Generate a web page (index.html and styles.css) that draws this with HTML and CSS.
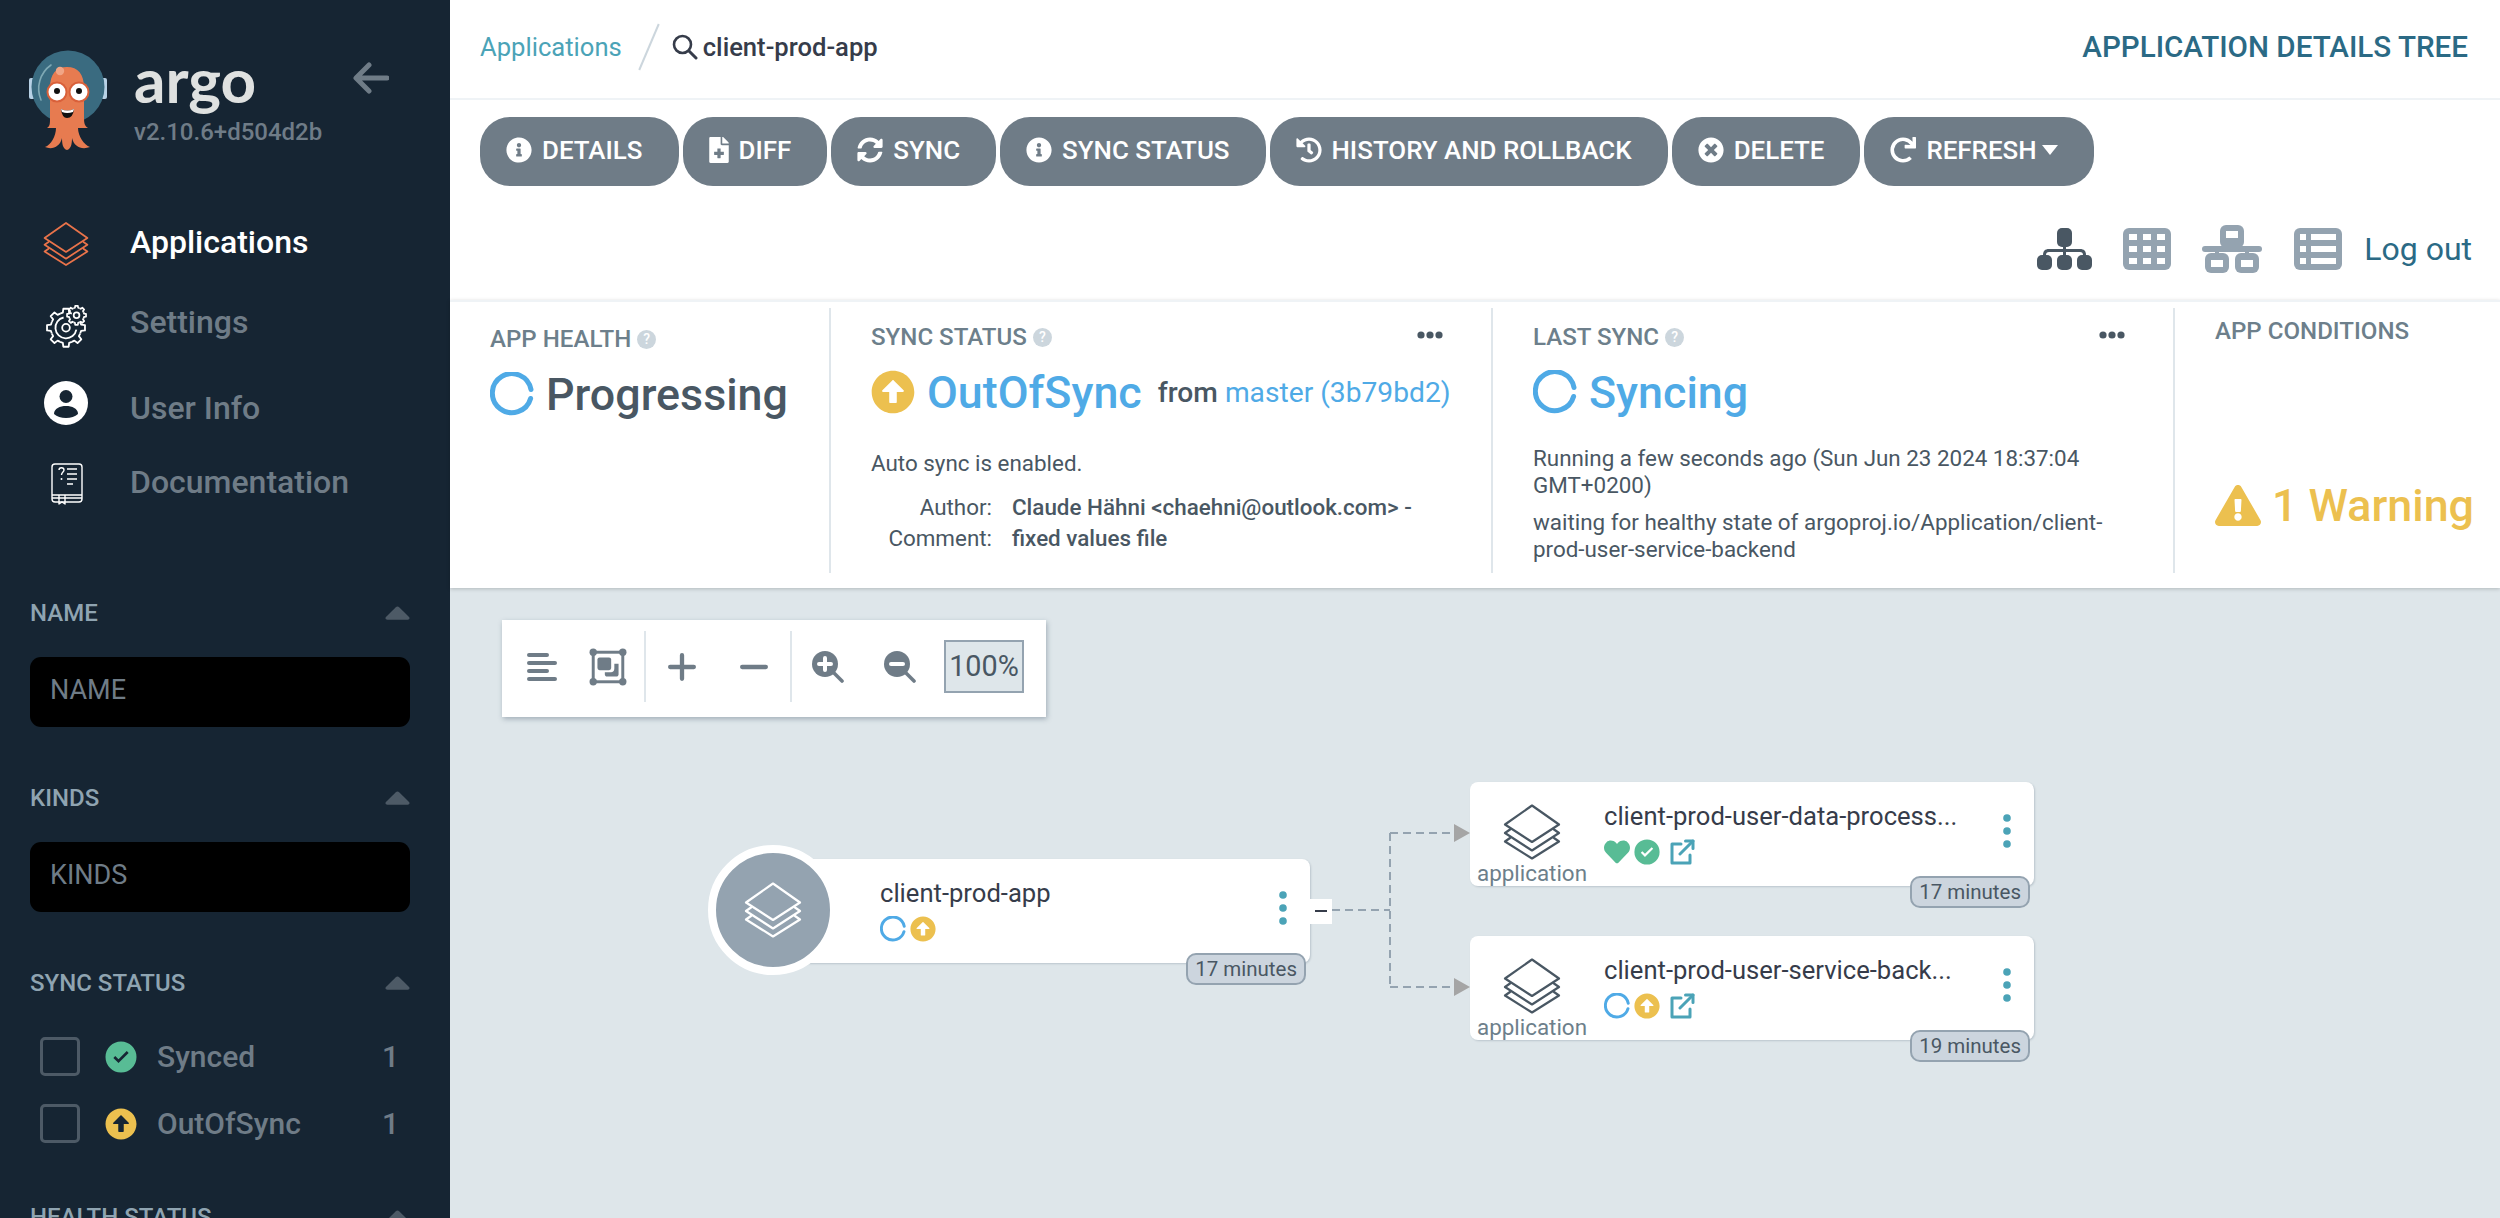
FILE: index.html
```html
<!DOCTYPE html>
<html lang="en">
<head>
    <meta charset="UTF-8">
    <meta name="viewport" content="width=device-width, initial-scale=1.0">
    <title>client-prod-app - Argo CD</title>
    <link rel="stylesheet" href="styles.css">
</head>
<body>

<!-- shared icons -->
<svg class="icon-defs" aria-hidden="true">
    <symbol id="i-info" viewBox="0 0 512 512"><path d="M256 8C119 8 8 119.1 8 256c0 137 111 248 248 248s248-111 248-248C504 119.1 393 8 256 8zm0 110c23.2 0 42 18.8 42 42s-18.8 42-42 42-42-18.8-42-42 18.8-42 42-42zm56 254c0 6.6-5.4 12-12 12h-88c-6.6 0-12-5.4-12-12v-24c0-6.6 5.4-12 12-12h12v-64h-12c-6.6 0-12-5.4-12-12v-24c0-6.6 5.4-12 12-12h64c6.6 0 12 5.4 12 12v100h12c6.6 0 12 5.4 12 12v24z"/></symbol>
    <symbol id="i-check" viewBox="0 0 512 512"><path fill-rule="evenodd" d="M504 256A248 248 0 1 1 8 256 248 248 0 0 1 504 256zM216 352L134 270 164 240 216 292 348 160 378 190z"/></symbol>
    <symbol id="i-up" viewBox="0 0 512 512"><path d="M8 256C8 119 119 8 256 8s248 111 248 248-111 248-248 248S8 393 8 256zm292 116V256h70.900c10.700 0 16.100-13 8.500-20.500L264.500 121.200c-4.700-4.700-12.200-4.700-16.900 0l-115 114.300c-7.600 7.600-2.200 20.500 8.500 20.500H212v116c0 6.600 5.400 12 12 12h64c6.600 0 12-5.400 12-12z"/></symbol>
    <symbol id="i-times" viewBox="0 0 512 512"><path d="M256 8C119 8 8 119 8 256s111 248 248 248 248-111 248-248S393 8 256 8zm121.6 313.1c4.7 4.7 4.7 12.3 0 17L338 377.6c-4.7 4.7-12.3 4.7-17 0L256 312l-65.1 65.6c-4.7 4.7-12.3 4.7-17 0L134.4 338c-4.7-4.7-4.7-12.3 0-17l65.6-65-65.6-65.1c-4.7-4.7-4.7-12.3 0-17l39.6-39.6c4.7-4.7 12.3-4.7 17 0l65 65.7 65.1-65.6c4.7-4.7 12.3-4.7 17 0l39.6 39.6c4.7 4.7 4.7 12.3 0 17L312 256l65.6 65.1z"/></symbol>
    <symbol id="i-redo" viewBox="0 0 512 512"><path d="M500.33 0h-47.41a12 12 0 0 0-12 12.57l4 82.76A247.42 247.42 0 0 0 256 8C119.34 8 7.9 119.53 8 256.19 8.1 393.07 119.1 504 256 504a247.1 247.1 0 0 0 166.18-63.91 12 12 0 0 0 .48-17.43l-34-34a12 12 0 0 0-16.38-.55A176 176 0 1 1 402.1 157.8l-101.53-4.87a12 12 0 0 0-12.57 12v47.41a12 12 0 0 0 12 12h200.33a12 12 0 0 0 12-12V12a12 12 0 0 0-12-12z"/></symbol>
    <symbol id="i-sync" viewBox="0 0 512 512"><path d="M370.72 133.28C339.458 104.008 298.888 87.962 255.848 88c-77.458.068-144.328 53.178-162.791 126.85-1.344 5.363-6.122 9.15-11.651 9.15H24.103c-7.498 0-13.194-6.807-11.807-14.176C33.933 94.924 134.813 8 256 8c66.448 0 126.791 26.136 171.315 68.685L463.03 40.97C478.149 25.851 504 36.559 504 57.941V192c0 13.255-10.745 24-24 24H345.941c-21.382 0-32.09-25.851-16.971-40.971l41.75-41.749zM32 296h134.059c21.382 0 32.09 25.851 16.971 40.971l-41.75 41.75c31.262 29.273 71.835 45.319 114.876 45.28 77.418-.07 144.315-53.144 162.787-126.849 1.344-5.363 6.122-9.15 11.651-9.15h57.304c7.498 0 13.193 6.807 11.807 14.176C478.067 417.076 377.187 504 256 504c-66.448 0-126.791-26.136-171.315-68.685L48.97 471.03C33.851 486.149 8 475.441 8 454.059V320c0-13.255 10.745-24 24-24z"/></symbol>
    <symbol id="i-history" viewBox="0 0 512 512"><path d="M504 255.531c.253 136.64-111.18 248.372-247.82 248.468-59.015.042-113.223-20.53-155.822-54.911-11.077-8.94-11.905-25.541-1.839-35.607l11.267-11.267c8.609-8.609 22.353-9.551 31.891-1.984C173.062 425.135 212.781 440 256 440c101.705 0 184-82.311 184-184 0-101.705-82.311-184-184-184-48.814 0-93.149 18.969-126.068 49.932l50.754 50.754c10.08 10.08 2.941 27.314-11.313 27.314H24c-8.837 0-16-7.163-16-16V38.627c0-14.254 17.234-21.393 27.314-11.314l49.372 49.372C129.209 34.136 189.552 8 256 8c136.81 0 247.747 110.78 248 247.531zm-180.912 78.784l9.823-12.63c8.138-10.463 6.253-25.542-4.21-33.679L288 256.349V152c0-13.255-10.745-24-24-24h-16c-13.255 0-24 10.745-24 24v135.651l65.409 50.874c10.463 8.137 25.541 6.253 33.679-4.21z"/></symbol>
    <symbol id="i-file" viewBox="0 0 384 512"><path d="M377 105L279.1 7c-4.5-4.5-10.6-7-17-7H256v128h128v-6.1c0-6.3-2.5-12.4-7-16.9zm-153 31V0H24C10.7 0 0 10.7 0 24v464c0 13.3 10.7 24 24 24h336c13.3 0 24-10.7 24-24V160H248c-13.2 0-24-10.8-24-24zm64 160v48c0 4.4-3.6 8-8 8h-56v56c0 4.4-3.6 8-8 8h-48c-4.4 0-8-3.6-8-8v-56h-56c-4.4 0-8-3.6-8-8v-48c0-4.4 3.6-8 8-8h56v-56c0-4.4 3.6-8 8-8h48c4.4 0 8 3.6 8 8v56h56c4.4 0 8 3.6 8 8z"/></symbol>
    <symbol id="i-heart" viewBox="0 0 512 512"><path d="M462.3 62.6C407.5 15.9 326 24.3 275.7 76.2L256 96.5l-19.7-20.3C186.1 24.3 104.5 15.9 49.7 62.6c-62.8 53.6-66.1 149.8-9.9 207.9l193.5 199.8c12.5 12.9 32.8 12.9 45.3 0l193.5-199.8c56.3-58.1 53-154.3-9.8-207.9z"/></symbol>
    <symbol id="i-warning" viewBox="0 0 576 512"><path d="M569.517 440.013C587.975 472.007 564.806 512 527.94 512H48.054c-36.937 0-59.999-40.055-41.577-71.987L246.423 23.985c18.467-32.009 64.72-31.951 83.154 0l239.94 416.028zM288 354c-25.405 0-46 20.595-46 46s20.595 46 46 46 46-20.595 46-46-20.595-46-46-46zm-43.673-165.346l7.418 136c.347 6.364 5.609 11.346 11.982 11.346h48.546c6.373 0 11.635-4.982 11.982-11.346l7.418-136c.375-6.874-5.098-12.654-11.982-12.654h-63.383c-6.884 0-12.356 5.78-11.981 12.654z"/></symbol>
    <symbol id="i-spin" viewBox="0 0 44 44"><path d="M40.6 26.5A19.5 19.5 0 1 1 41 17.5" fill="none" stroke="currentColor" stroke-width="5" stroke-linecap="round"/></symbol>
    <symbol id="i-layers" viewBox="0 0 58 56"><g fill="none" stroke="currentColor" stroke-width="2.2" stroke-linejoin="round" stroke-linecap="round"><path d="M29 1.5L56 20.5 29 38 2 20.5z"/><path d="M7 25.5L2 29 29 46.5 56 29 51 25.5"/><path d="M7 34L2 37.5 29 54.5 56 37.5 51 34"/></g></symbol>
    <symbol id="i-external" viewBox="0 0 26 26"><g fill="none" stroke="currentColor" stroke-width="3" stroke-linecap="round" stroke-linejoin="round"><path d="M12 5H3v19h18v-8"/><path d="M11 15L24 2"/><path d="M16.5 2H24v7.5"/></g></symbol>
    <symbol id="i-kebab" viewBox="0 0 8 34"><circle cx="4" cy="4" r="3.8"/><circle cx="4" cy="17" r="3.8"/><circle cx="4" cy="30" r="3.8"/></symbol>
    <symbol id="i-dots" viewBox="0 0 26 8"><circle cx="4" cy="4" r="3.6"/><circle cx="13" cy="4" r="3.6"/><circle cx="22" cy="4" r="3.6"/></symbol>
    <symbol id="i-tri" viewBox="0 0 26 14"><path d="M11 1.2a3 3 0 0 1 4 0l10 10c1 1.2.5 2.8-1.5 2.8h-21C.5 14 0 12.4 1 11.2z"/></symbol>
    <path id="gear-tooth" d="M-6.1-14.8L-3.3-15.7-2.8-19.8 2.8-19.8 3.3-15.7 6.1-14.8" />
</svg>

<aside class="sidebar">
    <div class="brand">
        <svg class="brand-logo" viewBox="27 48 82 106">
            <rect x="29" y="78" width="6" height="21" rx="2" fill="#b7d1e5"/>
            <rect x="101" y="78" width="6" height="21" rx="2" fill="#b7d1e5"/>
            <circle cx="68" cy="87" r="36.5" fill="#3a6b80"/>
            <path d="M41 100A29 29 0 0 1 51 65" fill="none" stroke="#7fa9b4" stroke-width="1.6" stroke-linecap="round"/>
            <path d="M50 88C50 74 56 67 67 67S84 74 84 88V118C84 124 85 126 88 128L78 128C78 136 84 145 90 147 82 150 74 147 72 138 72 144 71 149 67 150 63 149 62 144 62 138 60 147 52 150 45 147 51 145 56 136 56 128H47C50 126 50 124 50 118z" fill="#e77b50"/>
            <circle cx="60" cy="71" r="4.2" fill="#f1a586"/>
            <circle cx="57" cy="92" r="10.5" fill="#d9603a"/>
            <circle cx="79" cy="92" r="10.5" fill="#d9603a"/>
            <circle cx="57" cy="92" r="8.5" fill="#fff"/>
            <circle cx="79" cy="92" r="8.5" fill="#fff"/>
            <circle cx="57" cy="91" r="3" fill="#111"/>
            <circle cx="79" cy="91" r="3" fill="#111"/>
            <path d="M61 109Q67 112 74 109 73 118 67 118 62 118 61 109z" fill="#111"/>
            <path d="M61 109Q67 112 74 109L73 112Q67 114 62 112z" fill="#fff"/>
        </svg>
        <div class="brand-text">
            <div class="brand-name">argo</div>
            <div class="brand-version">v2.10.6+d504d2b</div>
        </div>
        <svg class="brand-back" viewBox="0 0 36 32"><path d="M34 16H4M16 3L3 16 16 29" fill="none" stroke="currentColor" stroke-width="5" stroke-linecap="round" stroke-linejoin="round"/></svg>
    </div>

    <nav class="nav">
        <a class="nav-item nav-item-active">
            <span class="nav-icon"><svg class="nav-layers"><use href="#i-layers"/></svg></span>
            Applications
        </a>
        <a class="nav-item">
            <span class="nav-icon">
                <svg class="nav-gears" viewBox="-24 -36 48 60">
                    <g fill="none" stroke="#fff" stroke-width="1.9" stroke-linejoin="round">
                        <use href="#gear-tooth"/>
                        <use href="#gear-tooth" transform="rotate(90)"/>
                        <use href="#gear-tooth" transform="rotate(135)"/>
                        <use href="#gear-tooth" transform="rotate(180)"/>
                        <use href="#gear-tooth" transform="rotate(225)"/>
                        <use href="#gear-tooth" transform="rotate(270)"/>
                        <use href="#gear-tooth" transform="rotate(315)"/>
                        <path d="M-2.5-10.7A11 11 0 1 0 10.8 2"/>
                        <circle r="4"/>
                        <g transform="translate(11 -13) scale(.5)" stroke-width="3.6">
                            <use href="#gear-tooth"/>
                            <use href="#gear-tooth" transform="rotate(45)"/>
                            <use href="#gear-tooth" transform="rotate(90)"/>
                            <use href="#gear-tooth" transform="rotate(135)"/>
                            <use href="#gear-tooth" transform="rotate(180)"/>
                            <use href="#gear-tooth" transform="rotate(225)"/>
                            <use href="#gear-tooth" transform="rotate(270)"/>
                            <use href="#gear-tooth" transform="rotate(315)"/>
                            <circle r="6"/>
                        </g>
                    </g>
                </svg>
            </span>
            Settings
        </a>
        <a class="nav-item nav-item-user">
            <span class="nav-icon">
                <svg class="nav-user" viewBox="0 0 44 44"><circle cx="22" cy="22" r="22" fill="#fff"/><circle cx="22" cy="15.5" r="6.5" fill="#162533"/><path d="M10 33c0-5.5 6-8 12-8s12 2.500 12 8c-3 2.500-7 4-12 4s-9-1.500-12-4z" fill="#162533"/></svg>
            </span>
            User Info
        </a>
        <a class="nav-item nav-item-docs">
            <span class="nav-icon">
                <svg class="nav-doc" viewBox="0 0 32 42">
                    <g fill="none" stroke="#fff" stroke-width="1.4" stroke-linejoin="round">
                        <rect x="1" y="1" width="30" height="38" rx="3"/>
                        <path d="M1 32h30M1 35h30M8 32v9l3-2 3 2v-9"/>
                        <path d="M8 7c0-3 5-3 5 0 0 2-2.500 2-2.500 5M16 6h10M16 11h10M16 16h10M16 21h6"/>
                    </g>
                    <circle cx="10.500" cy="16" r="1" fill="#fff"/>
                </svg>
            </span>
            Documentation
        </a>
    </nav>

    <section class="filter filter-name">
        <div class="filter-head"><span>NAME</span><svg class="filter-tri"><use href="#i-tri"/></svg></div>
        <div class="filter-input">NAME</div>
    </section>
    <section class="filter">
        <div class="filter-head"><span>KINDS</span><svg class="filter-tri"><use href="#i-tri"/></svg></div>
        <div class="filter-input">KINDS</div>
    </section>
    <section class="filter">
        <div class="filter-head"><span>SYNC STATUS</span><svg class="filter-tri"><use href="#i-tri"/></svg></div>
        <div class="filter-row">
            <span class="checkbox"></span>
            <svg class="filter-status green"><use href="#i-check"/></svg>
            <span class="filter-label">Synced</span>
            <span class="filter-count">1</span>
        </div>
        <div class="filter-row">
            <span class="checkbox"></span>
            <svg class="filter-status yellow"><use href="#i-up"/></svg>
            <span class="filter-label">OutOfSync</span>
            <span class="filter-count">1</span>
        </div>
    </section>
    <section class="filter filter-health">
        <div class="filter-head"><span>HEALTH STATUS</span><svg class="filter-tri"><use href="#i-tri"/></svg></div>
    </section>
</aside>

<main class="content">
    <header class="topbar">
        <div class="crumbs">
            <a class="crumb-link">Applications</a>
            <span class="crumb-slash"></span>
            <svg class="crumb-search" viewBox="0 0 26 26"><circle cx="10.500" cy="10.500" r="8.500" fill="none" stroke="currentColor" stroke-width="2.600"/><path d="M17 17l7 7" stroke="currentColor" stroke-width="3" stroke-linecap="round"/></svg>
            <span class="crumb-current">client-prod-app</span>
        </div>
        <div class="page-title">APPLICATION DETAILS TREE</div>
    </header>

    <div class="actions">
        <button class="btn"><svg class="btn-icon"><use href="#i-info"/></svg>DETAILS</button>
        <button class="btn"><svg class="btn-icon btn-icon-file"><use href="#i-file"/></svg>DIFF</button>
        <button class="btn"><svg class="btn-icon"><use href="#i-sync"/></svg>SYNC</button>
        <button class="btn"><svg class="btn-icon"><use href="#i-info"/></svg>SYNC STATUS</button>
        <button class="btn"><svg class="btn-icon"><use href="#i-history"/></svg>HISTORY AND ROLLBACK</button>
        <button class="btn"><svg class="btn-icon"><use href="#i-times"/></svg>DELETE</button>
        <button class="btn"><svg class="btn-icon"><use href="#i-redo"/></svg>REFRESH<span class="btn-caret"></span></button>
    </div>

    <div class="view-row">
        <svg class="view-tree" viewBox="0 0 55 42">
            <rect x="20" width="15" height="19" rx="5"/>
            <rect x="26" y="15" width="3" height="15"/>
            <path d="M6 30v-3c0-4 2-6 6-6h31c4 0 6 2 6 6v3h-3v-3c0-2-1-3-3-3H12c-2 0-3 1-3 3v3z"/>
            <rect y="27" width="15" height="15" rx="5"/>
            <rect x="20" y="27" width="15" height="15" rx="5"/>
            <rect x="40" y="27" width="15" height="15" rx="5"/>
        </svg>
        <svg class="view-grid" viewBox="0 0 48 42">
            <rect width="48" height="42" rx="6"/>
            <g fill="#fff"><rect x="6" y="6" width="8" height="6"/><rect x="20" y="6" width="8" height="6"/><rect x="34" y="6" width="8" height="6"/><rect x="6" y="18" width="8" height="6"/><rect x="20" y="18" width="8" height="6"/><rect x="34" y="18" width="8" height="6"/><rect x="6" y="30" width="8" height="6"/><rect x="20" y="30" width="8" height="6"/><rect x="34" y="30" width="8" height="6"/></g>
        </svg>
        <svg class="view-net" viewBox="0 0 60 48">
            <rect x="18" width="24" height="23" rx="6"/>
            <rect x="3" y="28" width="24" height="20" rx="6"/>
            <rect x="33" y="28" width="24" height="20" rx="6"/>
            <rect y="21" width="60" height="6" rx="3"/>
            <rect x="28" y="20" width="4" height="6"/>
            <rect x="13" y="24" width="4" height="6"/>
            <rect x="43" y="24" width="4" height="6"/>
            <g fill="#fff"><rect x="24" y="6" width="12" height="7"/><rect x="9" y="35" width="12" height="7"/><rect x="39" y="35" width="12" height="7"/></g>
        </svg>
        <svg class="view-list" viewBox="0 0 48 42">
            <rect width="48" height="42" rx="6"/>
            <g fill="#fff"><rect x="6" y="6" width="6" height="6"/><rect x="17" y="6" width="25" height="6"/><rect x="6" y="18" width="6" height="6"/><rect x="17" y="18" width="25" height="6"/><rect x="6" y="30" width="6" height="6"/><rect x="17" y="30" width="25" height="6"/></g>
        </svg>
        <a class="logout">Log out</a>
    </div>

    <section class="status-panel">
        <div class="status-col status-health">
            <div class="status-title">APP HEALTH<span class="help">?</span></div>
            <div class="status-value">
                <svg class="status-icon blue"><use href="#i-spin"/></svg>
                <span class="value-dark">Progressing</span>
            </div>
        </div>
        <div class="status-col status-sync">
            <div class="status-title">SYNC STATUS<span class="help">?</span><svg class="status-more"><use href="#i-dots"/></svg></div>
            <div class="status-value">
                <svg class="status-icon yellow"><use href="#i-up"/></svg>
                <span class="value-blue">OutOfSync</span>
                <span class="value-from">from <a class="value-rev">master (3b79bd2)</a></span>
            </div>
            <div class="status-note">Auto sync is enabled.</div>
            <dl class="status-meta">
                <dt>Author:</dt><dd>Claude Hähni &lt;chaehni@outlook.com&gt; -</dd>
                <dt>Comment:</dt><dd>fixed values file</dd>
            </dl>
        </div>
        <div class="status-col status-last">
            <div class="status-title">LAST SYNC<span class="help">?</span><svg class="status-more"><use href="#i-dots"/></svg></div>
            <div class="status-value">
                <svg class="status-icon blue"><use href="#i-spin"/></svg>
                <span class="value-blue">Syncing</span>
            </div>
            <div class="status-para">Running a few seconds ago (Sun Jun 23 2024 18:37:04 GMT+0200)</div>
            <div class="status-para">waiting for healthy state of argoproj.io/Application/client-prod-user-service-backend</div>
        </div>
        <div class="status-col status-cond">
            <div class="status-title">APP CONDITIONS</div>
            <div class="status-warning"><svg class="warning-icon"><use href="#i-warning"/></svg>1 Warning</div>
        </div>
    </section>

    <section class="graph">
        <div class="toolbar">
            <span class="tool tool-narrow">
                <svg class="tool-align" viewBox="0 0 30 30"><path d="M2 3h18M2 11h26M2 19h18M2 27h26" stroke="currentColor" stroke-width="4" stroke-linecap="round"/></svg>
            </span>
            <span class="tool tool-narrow">
                <svg class="tool-fit" viewBox="0 0 36 36">
                    <rect x="4" y="4" width="28" height="28" fill="none" stroke="currentColor" stroke-width="2.800"/>
                    <circle cx="4" cy="4" r="3.500"/><circle cx="32" cy="4" r="3.500"/><circle cx="4" cy="32" r="3.500"/><circle cx="32" cy="32" r="3.500"/>
                    <rect x="8" y="9" width="13" height="12" rx="2"/><path d="M24 15h4v10c0 1-1 2-2 2H17c-1 0-2-1-2-2v-2h5c3 0 4-1 4-4z"/>
                </svg>
            </span>
            <span class="tool-sep"></span>
            <span class="tool">
                <svg class="tool-plus" viewBox="0 0 26 26"><path d="M13 2v22M2 13h22" stroke="currentColor" stroke-width="4" stroke-linecap="round"/></svg>
            </span>
            <span class="tool">
                <svg class="tool-plus" viewBox="0 0 26 26"><path d="M2 13h22" stroke="currentColor" stroke-width="4" stroke-linecap="round"/></svg>
            </span>
            <span class="tool-sep"></span>
            <span class="tool">
                <svg class="tool-svg" viewBox="0 0 32 32"><circle cx="13" cy="13" r="13"/><path d="M13 7v12M7 13h12" stroke="#fff" stroke-width="4" stroke-linecap="round"/><path d="M22 22l8 8" stroke="currentColor" stroke-width="3.600" stroke-linecap="round"/></svg>
            </span>
            <span class="tool">
                <svg class="tool-svg" viewBox="0 0 32 32"><circle cx="13" cy="13" r="13"/><path d="M7 13h12" stroke="#fff" stroke-width="4" stroke-linecap="round"/><path d="M22 22l8 8" stroke="currentColor" stroke-width="3.600" stroke-linecap="round"/></svg>
            </span>
            <span class="tool-zoom">100%</span>
        </div>

        <svg class="edges" viewBox="0 0 800 200">
            <path d="M0 77H58M58 0V154M58 0H130M58 154H130" fill="none" stroke="#94a3b0" stroke-width="2" stroke-dasharray="8 5"/>
            <path d="M122-9L138 0 122 9zM122 145L138 154 122 163z" fill="#a5a5a5"/>
        </svg>

        <div class="node node-root">
            <div class="node-body">
                <div class="node-name">client-prod-app</div>
                <div class="node-badges">
                    <svg class="badge blue"><use href="#i-spin"/></svg>
                    <svg class="badge yellow"><use href="#i-up"/></svg>
                </div>
            </div>
            <svg class="node-kebab"><use href="#i-kebab"/></svg>
            <span class="node-collapse"></span>
            <span class="node-age">17 minutes</span>
        </div>
        <div class="root-circle"><svg class="root-layers"><use href="#i-layers"/></svg></div>

        <div class="node node-app node-first">
            <div class="node-kind"><svg class="kind-layers"><use href="#i-layers"/></svg><span>application</span></div>
            <div class="node-body">
                <div class="node-name">client-prod-user-data-process...</div>
                <div class="node-badges">
                    <svg class="badge green"><use href="#i-heart"/></svg>
                    <svg class="badge green"><use href="#i-check"/></svg>
                    <svg class="badge-link"><use href="#i-external"/></svg>
                </div>
            </div>
            <svg class="node-kebab"><use href="#i-kebab"/></svg>
            <span class="node-age">17 minutes</span>
        </div>
        <div class="node node-app node-second">
            <div class="node-kind"><svg class="kind-layers"><use href="#i-layers"/></svg><span>application</span></div>
            <div class="node-body">
                <div class="node-name">client-prod-user-service-back...</div>
                <div class="node-badges">
                    <svg class="badge blue"><use href="#i-spin"/></svg>
                    <svg class="badge yellow"><use href="#i-up"/></svg>
                    <svg class="badge-link"><use href="#i-external"/></svg>
                </div>
            </div>
            <svg class="node-kebab"><use href="#i-kebab"/></svg>
            <span class="node-age">19 minutes</span>
        </div>
    </section>
</main>

</body>
</html>
```

FILE: styles.css
```css
* {
    box-sizing: border-box;
}

body {
    margin: 0;
    height: 100vh;
    display: flex;
    overflow: hidden;
    font-family: Roboto, sans-serif;
    background: #dee6ea;
    color: #495763;
}

.icon-defs {
    display: none;
}

.green { color: #58bc95; fill: #58bc95; }
.yellow { color: #ecc04f; fill: #ecc04f; }
.blue { color: #4faae6; fill: #4faae6; }

/* sidebar */
.sidebar {
    width: 450px;
    flex: none;
    height: 100%;
    overflow: hidden;
    background: #162533;
    color: #6f7c87;
}

.brand {
    display: flex;
    height: 192px;
    padding: 48px 0 0 27px;
}

.brand-logo {
    width: 82px;
    height: 106px;
    flex: none;
}

.brand-text {
    margin-left: 25px;
    width: 220px;
}

.brand-name {
    font-family: Lato, sans-serif;
    font-weight: 700;
    font-size: 62px;
    line-height: 62px;
    color: #dfe1e0;
}

.brand-version {
    font-size: 24px;
    line-height: 30px;
    margin-top: 7px;
    font-weight: 500;
}

.brand-back {
    width: 36px;
    height: 32px;
    margin: 14px 0 0 -1px;
    color: #6f7c87;
}

.nav-item {
    display: flex;
    align-items: center;
    height: 80px;
    font-size: 32px;
    font-weight: 500;
}

.nav-item-active {
    color: #fff;
    margin-top: 10px;
}

.nav-item-user {
    margin-top: 6px;
}

.nav-item-docs {
    margin-top: -6px;
}

.nav-icon {
    width: 130px;
    padding-left: 43px;
    display: flex;
}

.nav-layers {
    width: 46px;
    height: 46px;
    color: #e9734a;
    margin-top: 4px;
}

.nav-gears {
    width: 46px;
    height: 58px;
}

.nav-user {
    width: 44px;
    height: 44px;
    margin: -11px 0 0 1px;
}

.nav-doc {
    width: 32px;
    height: 42px;
    margin-left: 8px;
    margin-top: 4px;
}

.filter {
    padding: 0 40px 0 30px;
    margin-top: 56px;
}

.filter-name {
    margin-top: 76px;
}

.filter-head {
    display: flex;
    justify-content: space-between;
    align-items: center;
    height: 30px;
    font-size: 24px;
    font-weight: 500;
    color: #8fa4b1;
}

.filter-tri {
    width: 25px;
    height: 14px;
    fill: #4d5a66;
}

.filter-input {
    height: 70px;
    margin-top: 29px;
    padding: 0 20px;
    line-height: 66px;
    font-size: 27px;
    background: #000;
    border-radius: 11px;
    color: #6f7c87;
}

.filter-row {
    display: flex;
    align-items: center;
    height: 67px;
    padding-left: 10px;
    font-size: 30px;
    font-weight: 500;
}

.filter-head + .filter-row {
    margin-top: 25px;
}

.checkbox {
    width: 40px;
    height: 39px;
    border: 3px solid #4d5a66;
    border-radius: 5px;
}

.filter-status {
    width: 32px;
    height: 32px;
    margin-left: 25px;
}

.filter-label {
    margin-left: 20px;
    flex: 1;
}

.filter-count {
    margin-right: 11px;
}

.filter-health {
    margin-top: 45px;
}

/* main area */
.content {
    flex: 1;
    min-width: 0;
    display: flex;
    flex-direction: column;
}

.topbar {
    height: 100px;
    flex: none;
    display: flex;
    justify-content: space-between;
    align-items: center;
    padding: 0 32px 4px 30px;
    background: #fff;
    border-bottom: 2px solid #eff3f6;
}

.crumbs {
    display: flex;
    align-items: center;
    font-size: 25.6px;
}

.crumb-link {
    color: #4ba3b7;
}

.crumb-slash {
    width: 2px;
    height: 50px;
    margin: 0 22px 0 26px;
    background: #ccd6dd;
    transform: rotate(23deg);
}

.crumb-search {
    width: 26px;
    height: 26px;
    margin-right: 5px;
    color: #363c4a;
}

.crumb-current {
    color: #363c4a;
    font-weight: 500;
}

.page-title {
    font-size: 29.6px;
    font-weight: 500;
    color: #2b6a85;
}

.actions {
    display: flex;
    gap: 4px;
    padding: 17px 0 0 30px;
    background: #fff;
    height: 86px;
    flex: none;
}

.btn {
    display: flex;
    align-items: center;
    height: 69px;
    padding: 0 36px 3px 26px;
    border: none;
    border-radius: 30px;
    background: #6f7c87;
    color: #fff;
    font-family: Roboto, sans-serif;
    font-size: 25.9px;
    font-weight: 500;
    white-space: nowrap;
}

.btn-icon {
    width: 26px;
    height: 26px;
    margin-right: 10px;
    fill: #fff;
}

.btn-icon-file {
    width: 20px;
}

.btn-caret {
    width: 0;
    height: 0;
    margin-left: 5px;
    border-left: 8px solid transparent;
    border-right: 8px solid transparent;
    border-top: 10px solid #fff;
}

.view-row {
    height: 114px;
    flex: none;
    display: flex;
    align-items: center;
    justify-content: flex-end;
    padding: 12px 28px 0 0;
    background: #fff;
}

.view-tree {
    width: 55px;
    height: 42px;
    fill: #495763;
}

.view-grid,
.view-list {
    width: 48px;
    height: 42px;
    fill: #94a3b0;
    margin-left: 32px;
}

.view-grid {
    margin-left: 31px;
}

.view-net {
    width: 60px;
    height: 48px;
    fill: #94a3b0;
    margin-left: 31.5px;
}

.logout {
    margin-left: 22px;
    font-size: 32px;
    color: #2b6a85;
}

.status-panel {
    height: 288px;
    flex: none;
    display: flex;
    padding: 6px 0 15px;
    background: #fff;
    border-top: 2px solid #eff3f6;
    box-shadow: 0 1px 4px rgba(0, 0, 0, 0.2);
    position: relative;
}

.status-col {
    border-right: 2px solid #dfe6eb;
    padding-left: 40px;
    color: #495763;
}

.status-health { width: 381px; padding-top: 16px; }
.status-sync { width: 662px; padding-top: 14px; }
.status-last { width: 682px; padding-top: 14px; }
.status-cond { flex: 1; border-right: none; padding-top: 8px; }

.status-title {
    display: flex;
    align-items: center;
    height: 30px;
    font-size: 24.1px;
    font-weight: 500;
    color: #6d7f8b;
}

.help {
    width: 19px;
    height: 19px;
    margin-left: 6px;
    border-radius: 50%;
    background: #ccd6dd;
    color: #fff;
    font-size: 14px;
    line-height: 19px;
    text-align: center;
}

.status-more {
    width: 26px;
    height: 8px;
    margin: 0 48px 4px auto;
    fill: #495763;
}

.status-value {
    display: flex;
    align-items: center;
    height: 60px;
    margin-top: 10px;
    font-size: 44.8px;
    font-weight: 500;
    white-space: nowrap;
}

.status-icon {
    width: 44px;
    height: 44px;
    flex: none;
    margin-right: 12px;
}

.value-blue { color: #4faae6; }
.value-dark { color: #495763; }

.value-from {
    margin-left: 16px;
    font-size: 28.2px;
    font-weight: 500;
}

.value-rev {
    color: #4faae6;
    font-weight: 400;
}

.status-note {
    margin-top: 26px;
    font-size: 22.4px;
    line-height: 31px;
}

.status-meta {
    display: grid;
    grid-template-columns: 121px 1fr;
    column-gap: 20px;
    row-gap: 0;
    margin: 13px 0 0;
    font-size: 22.4px;
    line-height: 31px;
}

.status-meta dt {
    text-align: right;
}

.status-meta dd {
    margin: 0;
    font-weight: 500;
}

.status-para {
    margin-top: 10px;
    padding-right: 50px;
    font-size: 22.4px;
    line-height: 27px;
}

.status-value + .status-para {
    margin-top: 23px;
}

.status-warning {
    display: flex;
    align-items: center;
    height: 60px;
    margin-top: 129px;
    font-size: 44.8px;
    font-weight: 500;
    color: #ecc04f;
    white-space: nowrap;
}

.warning-icon {
    width: 46px;
    height: 41px;
    margin-right: 11px;
    fill: #ecc04f;
}

/* graph canvas */
.graph {
    flex: 1;
    position: relative;
    overflow: hidden;
}

.toolbar {
    position: absolute;
    left: 52px;
    top: 32px;
    width: 544px;
    height: 97px;
    display: flex;
    align-items: center;
    padding: 0 0 4px 7px;
    background: #fff;
    box-shadow: 1px 2px 5px rgba(50, 70, 90, 0.35);
    color: #6f7c87;
}

.tool {
    width: 72px;
    display: flex;
    justify-content: center;
    color: #6f7c87;
    fill: #6f7c87;
}

.tool-narrow {
    width: 66px;
}

.tool-narrow + .tool-sep {
    margin-left: 3px;
}

.tool-svg {
    height: 32px;
    width: 32px;
}

.tool-align {
    width: 30px;
    height: 30px;
}

.tool-fit {
    width: 38px;
    height: 38px;
}

.tool-plus {
    width: 28px;
    height: 28px;
}

.tool-sep {
    width: 2px;
    height: 71px;
    background: #dfe6eb;
}

.tool-zoom {
    width: 80px;
    height: 53px;
    margin-left: 8px;
    border: 2px solid #94a3b0;
    background: #dee6ea;
    color: #495763;
    font-size: 28.8px;
    line-height: 49px;
    text-align: center;
}

.edges {
    position: absolute;
    left: 882px;
    top: 245px;
    width: 800px;
    height: 200px;
    overflow: visible;
}

.node {
    position: absolute;
    height: 104px;
    display: flex;
    background: #fff;
    border-radius: 8px;
    box-shadow: 1px 1px 2px rgba(50, 70, 90, 0.2);
    color: #363c4a;
}

.node-root {
    left: 322px;
    top: 271px;
    width: 538px;
    padding: 19px 0 0 108px;
}

.node-app {
    left: 1020px;
    width: 564px;
    padding-top: 19px;
}

.node-first { top: 194px; }
.node-second { top: 348px; }

.node-kind {
    position: absolute;
    left: 0;
    top: 0;
    width: 124px;
    height: 104px;
    text-align: center;
    font-size: 22.4px;
    line-height: 26px;
    color: #6d7f8b;
}

.kind-layers {
    display: block;
    width: 58px;
    height: 56px;
    margin: 22px auto 0;
    color: #495763;
}

.node-app .node-body {
    margin-left: 134px;
}

.node-name {
    font-size: 25.6px;
    line-height: 30px;
    white-space: nowrap;
}

.node-badges {
    display: flex;
    align-items: center;
    gap: 4px;
    margin-top: 8px;
}

.badge {
    width: 26px;
    height: 26px;
}

.badge-link {
    width: 26px;
    height: 26px;
    margin-left: 5px;
    color: #4ba3b7;
}

.node-kebab {
    position: absolute;
    right: 23px;
    top: 32px;
    width: 8px;
    height: 34px;
    fill: #4ba3b7;
}

.node-age {
    position: absolute;
    right: 4px;
    bottom: -22px;
    height: 32px;
    padding: 0 7px;
    border: 2px solid #94a3b0;
    border-radius: 10px;
    background: #ccd5de;
    color: #495763;
    font-size: 20.5px;
    line-height: 28px;
    white-space: nowrap;
}

.node-collapse {
    position: absolute;
    left: 100%;
    top: 40px;
    width: 22px;
    height: 25px;
    background: #fff;
}

.node-collapse::after {
    content: "";
    position: absolute;
    left: 5px;
    top: 11px;
    width: 12px;
    height: 2px;
    background: #363c4a;
}

.root-circle {
    position: absolute;
    left: 258px;
    top: 257px;
    width: 130px;
    height: 130px;
    display: flex;
    align-items: center;
    justify-content: center;
    border: 8px solid #fff;
    border-radius: 50%;
    background: #94a3b0;
}

.root-layers {
    width: 58px;
    height: 56px;
    color: #fff;
}
```
